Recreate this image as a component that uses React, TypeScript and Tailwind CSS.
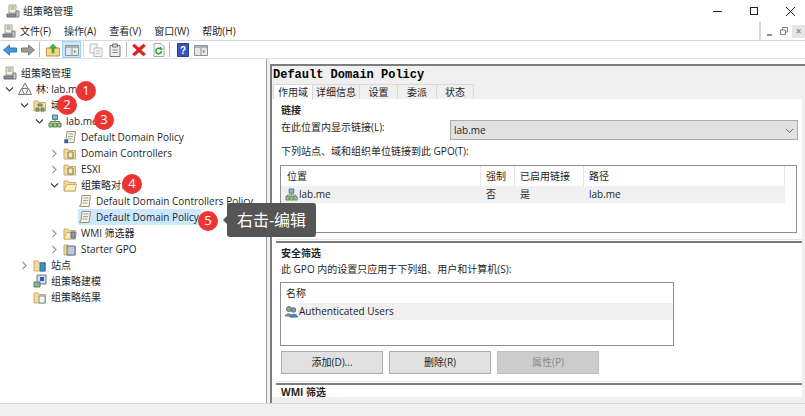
import type { ReactNode } from "react"

const ui = `font-['Open_Sans','Noto_Sans_CJK_SC',sans-serif]`

function Chevron({ open }: { open?: boolean }) {
  return (
    <svg width="9" height="9" viewBox="0 0 9 9" fill="none" stroke={open ? "#404040" : "#9a9a9a"} strokeWidth="1.2">
      {open ? <path d="M1 2.500 4.500 6 8 2.500" /> : <path d="M2.500 1 6 4.500 2.500 8" />}
    </svg>
  )
}

function ConsoleIcon() {
  return (
    <svg width="14" height="14" viewBox="0 0 14 14">
      <path d="M3 1h7v8H3z" fill="#f3efe2" stroke="#a8a28f" />
      <path d="M4.500 3h4M4.500 5h4" stroke="#8f8a78" />
      <path d="M1 10h9v3H1z" fill="#8a8f94" stroke="#666a70" />
      <path d="M10 7h3v6h-3z" fill="#c4c7ca" stroke="#7d8185" />
    </svg>
  )
}

function ForestIcon() {
  return (
    <svg width="14" height="14" viewBox="0 0 14 14" fill="#eeeeee" stroke="#77797c">
      <path d="M7 1 10 6.500H4z" />
      <path d="M3.500 6.500 6.500 12.500H.5z" />
      <path d="M10.500 6.500 13.500 12.500H7.500z" />
    </svg>
  )
}

function FolderIcon({ children, open }: { children?: ReactNode; open?: boolean }) {
  return (
    <svg width="14" height="14" viewBox="0 0 14 14">
      <path d="M1 3h4l1 1.500h6.500V13H1z" fill="#f4dc98" stroke="#c9ae68" />
      {open && <path d="M3.500 6.500H13.500L12 13H1z" fill="#fbeec2" stroke="#c9ae68" />}
      {children}
    </svg>
  )
}

function NetIcon({ size = 14 }: { size?: number }) {
  return (
    <svg width={size} height={size} viewBox="0 0 14 14">
      <path d="M4.500 1h5v4.500h-5z" fill="#8fb4cf" stroke="#54778f" />
      <path d="M7 5.500v2M2.500 9V7.500h9V9" fill="none" stroke="#6b8a5e" />
      <path d="M1 9h3.500v4H1zM5.300 9h3.500v4H5.300zM9.500 9H13v4H9.500z" fill="#9cc28a" stroke="#5f8a5a" />
    </svg>
  )
}

function ScrollIcon({ link }: { link?: boolean }) {
  return (
    <svg width="14" height="14" viewBox="0 0 14 14">
      <path d="M4 1.500h8.500L11 12.500H1.500L3 10z" fill="#f6f3e6" stroke="#99947f" />
      <path d="M5.500 4h5M5 6.500h5M4.500 9h5" stroke="#aaa58e" />
      {link && <path d="M1 9h4.500v4.500H1z" fill="#3c56a8" stroke="#ffffff" strokeWidth=".6" />}
    </svg>
  )
}

function Row({ level, open, leaf, icon, label, selected }: {
  level: number
  open?: boolean
  leaf?: boolean
  icon: ReactNode
  label: string
  selected?: boolean
}) {
  const pad = ["pl-[3px]", "pl-[3px]", "pl-[18px]", "pl-[33px]", "pl-[48px]", "pl-[63px]"][level]
  return (
    <div className={`flex h-4 items-center ${pad}`}>
      {level > 0 && (
        <span className="flex w-[15px] shrink-0 items-center justify-start pl-[2px]">
          {!leaf && <Chevron open={open} />}
        </span>
      )}
      <span className={`flex h-4 items-center pr-[2px] ${selected ? "bg-[#cce8ff]" : ""}`}>
        <span className="mr-[4px] flex w-[14px] shrink-0 items-center">{icon}</span>
        <span className="whitespace-nowrap text-[10px]">{label}</span>
      </span>
    </div>
  )
}

function Badge({ n, className }: { n: number; className: string }) {
  return (
    <div className={`absolute flex h-5 w-5 items-center justify-center rounded-full bg-[#ee3333] text-[13px] text-white ${className}`}>
      {n}
    </div>
  )
}

function ToolIcon({ children, className = "" }: { children: ReactNode; className?: string }) {
  return (
    <svg width="14" height="14" viewBox="0 0 14 14" className={`shrink-0 ${className}`}>
      {children}
    </svg>
  )
}

function ToolSep({ className = "" }: { className?: string }) {
  return <div className={`h-[15px] w-px shrink-0 bg-[#b8b8b8] ${className}`} />
}

function PanelGlyph() {
  return (
    <>
      <path d="M.5 2.500h13v10H.5z" fill="#e4e8ec" stroke="#8d9299" />
      <path d="M1 3h12v2H1z" fill="#a9b3bd" />
      <path d="M7 5v7" stroke="#8d9299" />
      <path d="M9 7l2 1.500L9 10z" fill="#3f9c4a" />
    </>
  )
}

function SectionLine() {
  return (
    <div className="flex h-[4px] flex-col">
      <div className="h-px bg-[#e3e3e3]" />
      <div className="h-px bg-white" />
      <div className="h-[2px] bg-[#7d7d7d]" />
    </div>
  )
}

function Btn({ children, disabled }: { children: ReactNode; disabled?: boolean }) {
  return (
    <div className={`flex h-[23px] w-[102px] items-center justify-center border text-[10px] ${disabled ? "border-[#bfbfbf] bg-[#cccccc] text-[#8a8a8a]" : "border-[#adadad] bg-[#e1e1e1]"}`}>
      {children}
    </div>
  )
}

export default function App() {
  return (
    <div className={`relative flex h-[416px] w-[805px] flex-col overflow-hidden bg-white text-[#1f1f1f] ${ui}`}>
      {/* title bar */}
      <div className="flex h-[22px] shrink-0 items-center pl-[6px]">
        <ConsoleIcon />
        <span className="ml-[3px] text-[10px]">组策略管理</span>
        <div className="ml-auto flex items-center">
          <div className="h-px w-[9px] bg-[#222]" />
          <div className="ml-[28px] h-[8px] w-[8px] border border-[#222]" />
          <svg width="9" height="9" viewBox="0 0 9 9" stroke="#222" className="ml-[28px] mr-[10px]">
            <path d="M0 0l9 9M9 0 0 9" />
          </svg>
        </div>
      </div>

      {/* menu bar */}
      <div className="flex h-[19px] shrink-0 items-center border-b border-[#d9d9d9] pl-[2px]">
        <ConsoleIcon />
        <div className="ml-[4px] flex gap-[13px] text-[10px]">
          <span>文件(F)</span>
          <span>操作(A)</span>
          <span>查看(V)</span>
          <span>窗口(W)</span>
          <span>帮助(H)</span>
        </div>
        <div className="ml-auto flex h-full items-center gap-px border-l-2 border-[#d9d9d9] pl-px">
          <div className="flex h-[13px] w-[14px] items-end justify-center bg-white pb-[2px]"><div className="h-[2px] w-[5px] bg-[#8a8f96]" /></div>
          <div className="flex h-[13px] w-[14px] items-center justify-center bg-white">
            <svg width="8" height="8" viewBox="0 0 8 8" fill="none" stroke="#7a7f86"><path d="M.5 3h5v4.500h-5zM2.500 3V.5h5V5H6" /></svg>
          </div>
          <div className="flex h-[13px] w-[13px] items-center justify-center bg-[#e6e6e6] text-[10px] font-bold leading-none text-[#8a8f96]">×</div>
        </div>
      </div>

      {/* toolbar */}
      <div className="flex h-[18px] shrink-0 items-center border-b border-[#e3e3e3] pl-[3px]">
        <ToolIcon><path d="M.5 7 6.500 2v3h7v4h-7v3z" fill="#3d9be0" stroke="#2a75b5" /></ToolIcon>
        <ToolIcon className="ml-[4px]"><path d="M13.500 7 7.500 2v3h-7v4h7v3z" fill="#9a9a9a" stroke="#7d7d7d" /></ToolIcon>
        <ToolSep className="ml-[4px]" />
        <ToolIcon className="ml-[6px]">
          <path d="M.5 5h13v8H.5z" fill="#f2d98e" stroke="#b99a4d" />
          <path d="M6 10V5H3.500L7 1l3.500 4H8v5z" fill="#55ad3c" stroke="#3e8a2b" strokeWidth=".6" />
        </ToolIcon>
        <div className="ml-[2px] flex h-[17px] w-[19px] shrink-0 items-center justify-center border border-[#99d1ff] bg-[#cce8ff]">
          <ToolIcon><PanelGlyph /></ToolIcon>
        </div>
        <ToolSep className="ml-[2px] bg-[#d8d8d8]" />
        <ToolIcon className="ml-[5px]">
          <path d="M1 1h7v9H1z" fill="#f5f5f5" stroke="#b9bcc0" />
          <path d="M5 5h8v8.500H5z" fill="#f5f5f5" stroke="#b9bcc0" />
          <path d="M7 8h4M7 10.500h4" stroke="#c3c6ca" />
        </ToolIcon>
        <ToolIcon className="ml-[5px]">
          <path d="M2 2.500h10v11H2z" fill="#eeeeee" stroke="#777" />
          <path d="M4.500 1h5v3h-5z" fill="#cfcfcf" stroke="#777" />
          <path d="M4.500 7h5M4.500 9.500h5" stroke="#888" />
        </ToolIcon>
        <ToolSep className="ml-[4px]" />
        <ToolIcon className="ml-[5px]"><path d="M2.500 1 7 5 11.500 1 13.500 3 9 7l4.500 4-2 2L7 9l-4.500 4-2-2L5 7 .5 3z" fill="#e02020" stroke="#b01818" strokeWidth=".5" /></ToolIcon>
        <ToolIcon className="ml-[6px]">
          <path d="M2 .5h7l3 3v10H2z" fill="#f5f5f5" stroke="#a8a8a8" />
          <path d="M9.500 8a2.800 2.800 0 1 1-1-2.200M8.500 4v2h2" fill="none" stroke="#2d9c3c" strokeWidth="1.500" />
        </ToolIcon>
        <ToolSep className="ml-[3px]" />
        <ToolIcon className="ml-[6px]">
          <path d="M1.500 .5h11v13h-11z" fill="#3a55b5" stroke="#2a3f8c" />
          <text x="7" y="11" textAnchor="middle" fontSize="10" fontWeight="700" fill="#fff" fontFamily="Liberation Sans">?</text>
        </ToolIcon>
        <ToolIcon className="ml-[4px]"><PanelGlyph /></ToolIcon>
      </div>

      {/* main */}
      <div className="flex min-h-0 flex-1">
        <div className="w-[267px] shrink-0 border-r border-[#a0a0a0] pt-[6px]">
          <Row level={0} icon={<ConsoleIcon />} label="组策略管理" />
          <Row level={1} open icon={<ForestIcon />} label="林: lab.me" />
          <Row level={2} open icon={<FolderIcon><path d="M5 6h4v2H5zM3 10h3v3H3zM8 10h3v3H8z" fill="#8fae80" stroke="#5f7f5a" /></FolderIcon>} label="域" />
          <Row level={3} open icon={<NetIcon />} label="lab.me" />
          <Row level={4} leaf icon={<ScrollIcon link />} label="Default Domain Policy" />
          <Row level={4} icon={<FolderIcon><path d="M5 6h5v6H5z" fill="#e8e8e0" stroke="#8a7a3c" /></FolderIcon>} label="Domain Controllers" />
          <Row level={4} icon={<FolderIcon><path d="M5 6h5v6H5z" fill="#e8e8e0" stroke="#8a7a3c" /></FolderIcon>} label="ESXI" />
          <Row level={4} open icon={<FolderIcon open />} label="组策略对象" />
          <Row level={5} leaf icon={<ScrollIcon />} label="Default Domain Controllers Policy" />
          <Row level={5} leaf selected icon={<ScrollIcon />} label="Default Domain Policy" />
          <Row level={4} icon={<FolderIcon open><path d="M8 6h4v6H8z" fill="#7d9fb8" stroke="#566f82" /></FolderIcon>} label="WMI 筛选器" />
          <Row level={4} icon={<FolderIcon><path d="M4 4h8v9H4z" fill="#b7cbdc" stroke="#62778a" /></FolderIcon>} label="Starter GPO" />
          <Row level={2} icon={<FolderIcon><path d="M7 5h5v8H7z" fill="#3f8fd0" stroke="#2a6ba3" /></FolderIcon>} label="站点" />
          <Row level={2} leaf icon={<svg width="14" height="14" viewBox="0 0 14 14"><path d="M4 1h9v9H4z" fill="#d7dde8" stroke="#6b7a96" /><path d="M1 8h6v5H1z" fill="#8fb08a" stroke="#5f7f5a" /><path d="M7 3h4v4H7z" fill="#3c56a8" /></svg>} label="组策略建模" />
          <Row level={2} leaf icon={<FolderIcon><path d="M6 6h6v7H6z" fill="#f4f4f4" stroke="#7d8ea3" /></FolderIcon>} label="组策略结果" />
        </div>
        <div className="w-[3px] shrink-0 bg-[#f0f0f0]" />

        {/* right pane */}
        <div className="flex min-w-0 flex-1 flex-col pt-[5px]">
          <div className="flex flex-1 flex-col border-t-2 border-l-2 border-[#7d7d7d] bg-[#f0f0f0]">
            <div className="flex h-[18px] shrink-0 items-center pl-px font-['Liberation_Mono',monospace] text-[12px] font-bold text-black">
              Default Domain Policy
            </div>
            <div className="ml-px flex h-[15px] shrink-0 items-end text-[10px]">
              <div className="z-10 -mb-px flex h-[16px] w-[40px] items-center justify-center border-x border-t border-[#d9d9d9] bg-white">作用域</div>
              <div className="flex h-[15px] w-[47px] items-center justify-center border-t border-r border-[#d9d9d9]">详细信息</div>
              <div className="flex h-[15px] w-[38px] items-center justify-center border-t border-r border-[#d9d9d9]">设置</div>
              <div className="flex h-[15px] w-[39px] items-center justify-center border-t border-r border-[#d9d9d9]">委派</div>
              <div className="flex h-[15px] w-[37px] items-center justify-center border-t border-r border-[#d9d9d9]">状态</div>
            </div>

            <div className="mr-[3px] flex h-[298px] shrink-0 flex-col overflow-hidden bg-white">
              <div className="flex h-[21px] shrink-0 items-center pl-[9px] pt-[2px] text-[10px] font-bold">链接</div>
              <div className="flex h-[20px] shrink-0 items-center pl-[9px] pr-[4px] text-[10px]">
                <span className="mb-[5px]">在此位置内显示链接(L):</span>
                <div className="ml-auto flex h-[20px] w-[348px] items-center justify-between border border-[#adadad] bg-[#e1e1e1] px-[3px]">
                  <span>lab.me</span>
                  <svg width="9" height="9" viewBox="0 0 9 9" fill="none" stroke="#666"><path d="M1 3l3.500 3.500L8 3" /></svg>
                </div>
              </div>
              <div className="flex h-[25px] shrink-0 items-center pb-[3px] pl-[9px] text-[10px]">下列站点、域和组织单位链接到此 GPO(T):</div>

              <div className="ml-[8px] mr-[5px] h-[68px] shrink-0 border border-[#8f8f8f]">
                <div className="flex h-[20px] items-center text-[10px]">
                  <div className="w-[200px] border-r border-[#e5e5e5] pl-[6px] leading-[20px]">位置</div>
                  <div className="w-[34px] border-r border-[#e5e5e5] pl-[5px] leading-[20px]">强制</div>
                  <div className="w-[69px] border-r border-[#e5e5e5] pl-[5px] leading-[20px]">已启用链接</div>
                  <div className="w-[201px] border-r border-[#e5e5e5] pl-[5px] leading-[20px]">路径</div>
                </div>
                <div className="flex h-[17px] w-[504px] items-center bg-[#f0f0f0] text-[10px]">
                  <div className="flex w-[200px] items-center pl-[4px]"><NetIcon size={13} /><span className="ml-px">lab.me</span></div>
                  <div className="w-[34px] pl-[5px]">否</div>
                  <div className="w-[69px] pl-[5px]">是</div>
                  <div className="pl-[5px]">lab.me</div>
                </div>
              </div>

              <div className="mt-[6px] shrink-0 pl-[4px]"><SectionLine /></div>
              <div className="flex h-[18px] shrink-0 items-center pl-[9px] pt-[2px] text-[10px] font-bold">安全筛选</div>
              <div className="flex h-[17px] shrink-0 items-center pl-[9px] text-[10px]">此 GPO 内的设置只应用于下列组、用户和计算机(S):</div>

              <div className="ml-[8px] mt-[4px] h-[64px] w-[394px] shrink-0 border border-[#8f8f8f]">
                <div className="flex h-[20px] items-center pl-[5px] text-[10px]">名称</div>
                <div className="flex h-[17px] items-center pl-[4px] text-[10px]">
                  <svg width="13" height="13" viewBox="0 0 13 13" className="shrink-0">
                    <circle cx="4" cy="4" r="2.500" fill="#8fa88a" stroke="#61785c" />
                    <path d="M.5 11c0-3 6-3 6 0z" fill="#8fa88a" stroke="#61785c" />
                    <circle cx="8.500" cy="5" r="2.300" fill="#7a9ab8" stroke="#4f6f8c" />
                    <path d="M5 12c0-3.500 7.500-3.500 7.500 0z" fill="#4b8fd0" stroke="#356e9f" />
                  </svg>
                  <span className="flex h-full flex-1 items-center bg-[#f0f0f0] pl-px">Authenticated Users</span>
                </div>
              </div>

              <div className="ml-[9px] mt-[5px] flex shrink-0 gap-[6px]">
                <Btn>添加(D)...</Btn>
                <Btn>删除(R)</Btn>
                <Btn disabled>属性(P)</Btn>
              </div>

              <div className="mt-[7px] shrink-0 pl-[4px]"><SectionLine /></div>
              <div className="pl-[9px] pt-px text-[10px] font-bold leading-[12px]">WMI 筛选</div>
            </div>
          </div>
        </div>
      </div>

      {/* status bar */}
      <div className="h-[13px] shrink-0 border-t border-[#d9d9d9] bg-[#f0f0f0]" />

      {/* callouts */}
      <Badge n={1} className="left-[76px] top-[81px]" />
      <Badge n={2} className="left-[57px] top-[95px]" />
      <Badge n={3} className="left-[94px] top-[110px]" />
      <Badge n={4} className="left-[122px] top-[174px]" />
      <Badge n={5} className="left-[198px] top-[211px]" />
      <div className="absolute left-[227px] top-[203px] flex h-[34px] w-[89px] items-center justify-center rounded-[3px] bg-[#555555] text-[16px] text-white">
        <div className="absolute -left-[4px] top-[13px] h-0 w-0 border-y-[4px] border-r-[4px] border-y-transparent border-r-[#555555]" />
        右击-编辑
      </div>
    </div>
  )
}
